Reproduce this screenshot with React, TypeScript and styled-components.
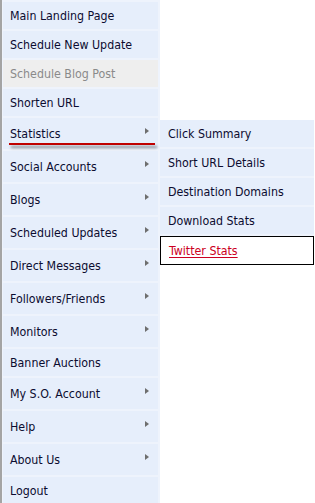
import styled, { createGlobalStyle } from "styled-components";

const GlobalStyle = createGlobalStyle`
  html, body {
    margin: 0;
    padding: 0;
    background: #fff;
  }
  body {
    font-family: "DejaVu Sans Condensed", "DejaVu Sans", sans-serif;
  }
`;

interface MenuItem {
  label: string;
  arrow?: boolean;
  disabled?: boolean;
  active?: boolean;
}

const items: MenuItem[] = [
  { label: "Main Landing Page" },
  { label: "Schedule New Update" },
  { label: "Schedule Blog Post", disabled: true },
  { label: "Shorten URL" },
  { label: "Statistics", arrow: true, active: true },
  { label: "Social Accounts", arrow: true },
  { label: "Blogs", arrow: true },
  { label: "Scheduled Updates", arrow: true },
  { label: "Direct Messages", arrow: true },
  { label: "Followers/Friends", arrow: true },
  { label: "Monitors", arrow: true },
  { label: "Banner Auctions" },
  { label: "My S.O. Account", arrow: true },
  { label: "Help", arrow: true },
  { label: "About Us", arrow: true },
  { label: "Logout" },
];

const statsItems = [
  "Click Summary",
  "Short URL Details",
  "Destination Domains",
  "Download Stats",
];

const App = () => {
  return (
    <>
      <GlobalStyle />
      <Page>
        <Menu>
          {items.map((item) => (
            <Item
              key={item.label}
              $tall={!!item.arrow}
              $disabled={!!item.disabled}
            >
              <Label $disabled={!!item.disabled}>{item.label}</Label>
              {item.arrow && <Arrow />}
              {item.active && (
                <>
                  <ActiveLine />
                  <SubMenu>
                    {statsItems.map((s) => (
                      <SubItem key={s}>{s}</SubItem>
                    ))}
                    <SubItemCurrent>
                      <SubLink>Twitter Stats</SubLink>
                    </SubItemCurrent>
                  </SubMenu>
                </>
              )}
            </Item>
          ))}
        </Menu>
      </Page>
    </>
  );
};

const Page = styled.div`
  display: flex;
  width: 315px;
  height: 503px;
  overflow: hidden;
`;

const Menu = styled.div`
  display: flex;
  flex-direction: column;
  gap: 2px;
  width: 155px;
  padding: 2px 2px 0 1px;
  border-left: 2px solid #a4a4a4;
  background: #eef3fc;
  flex-shrink: 0;
`;

const Item = styled.div<{ $tall: boolean; $disabled: boolean }>`
  position: relative;
  display: flex;
  align-items: center;
  height: ${(p) => (p.$tall ? 31 : 27)}px;
  padding: 1px 0 0 7px;
  box-sizing: border-box;
  background: ${(p) => (p.$disabled ? "#eeeeee" : "#e6eefb")};
  flex-shrink: 0;
`;

const Label = styled.span<{ $disabled: boolean }>`
  font-size: 12.3px;
  color: ${(p) => (p.$disabled ? "#8a8a8a" : "#0c0c30")};
  white-space: nowrap;
`;

const Arrow = styled.span`
  position: absolute;
  right: 9px;
  top: 10px;
  width: 0;
  height: 0;
  border-top: 3.5px solid transparent;
  border-bottom: 3.5px solid transparent;
  border-left: 4px solid #6e6e6e;
`;

const ActiveLine = styled.span`
  position: absolute;
  left: 6px;
  right: 3px;
  bottom: 4px;
  height: 2px;
  background: #c00000;
  box-shadow: 2px 3px 3px rgba(50, 50, 50, 0.55);
`;

const SubMenu = styled.div`
  position: absolute;
  left: calc(100% + 2px);
  top: 2px;
  width: 154px;
  display: flex;
  flex-direction: column;
  gap: 2px;
  background: #eef3fc;
  z-index: 2;
`;

const SubItem = styled.div`
  display: flex;
  align-items: center;
  height: 27px;
  padding: 1px 0 0 8px;
  box-sizing: border-box;
  background: #e6eefb;
  font-size: 12.3px;
  color: #0c0c30;
  white-space: nowrap;
`;

const SubItemCurrent = styled(SubItem)`
  height: 29px;
  background: #fff;
  border: 1px solid #000;
  padding-left: 8px;
`;

const SubLink = styled.span`
  color: #cc0022;
  text-decoration: underline;
  text-underline-offset: 2px;
`;

export default App;
